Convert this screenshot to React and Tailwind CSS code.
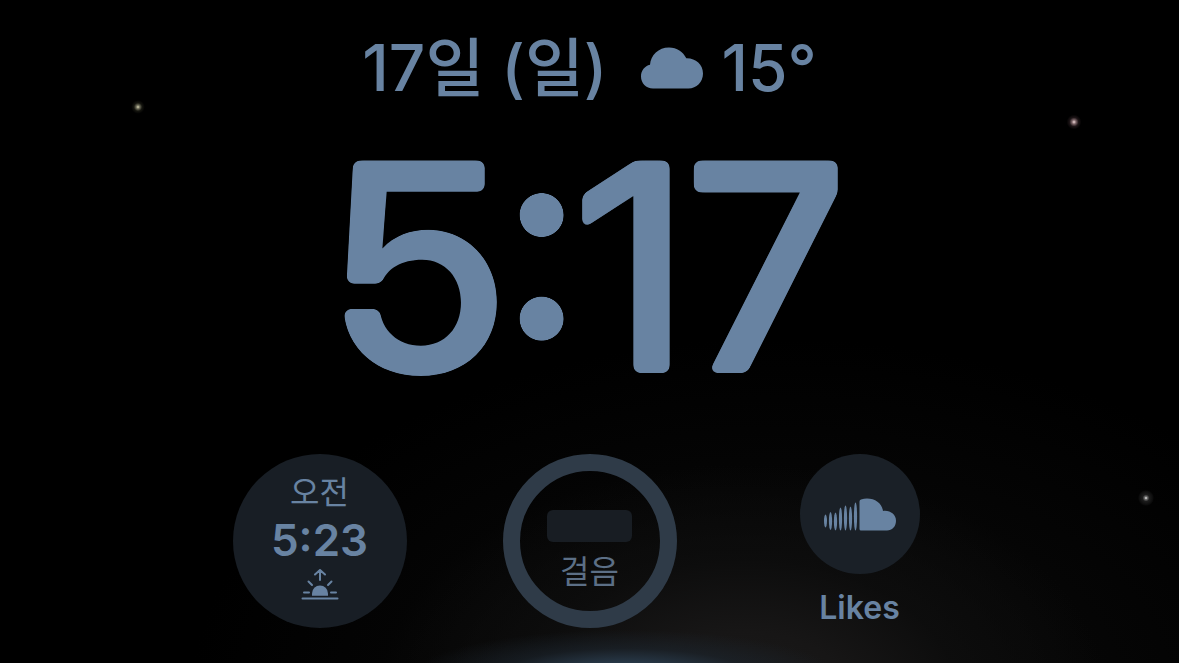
import React from 'react';

const stars = [
  { id: 'left', className: 'left-[11.7%] top-[16.1%] bg-[radial-gradient(circle,#d8d5b4_0%,#6b6a58_16%,#15150f_36%,transparent_60%)]' },
  { id: 'right', className: 'left-[91.1%] top-[18.4%] bg-[radial-gradient(circle,#f2dcdc_0%,#7d6669_18%,#1c1416_40%,transparent_65%)]' },
  { id: 'low', className: 'left-[97.2%] top-[75.1%] bg-[radial-gradient(circle,#f0f0ee_0%,#6a6a6a_14%,#1d1d1d_30%,#0c0c0c_60%,transparent_72%)]' },
];

function Sky() {
  return (
    <div aria-hidden="true" className="absolute inset-0 -z-10 overflow-hidden bg-black">
      <div className="absolute inset-0 bg-[radial-gradient(ellipse_50%_55%_at_66%_106%,#0b0b0b_0%,#060606_50%,transparent_100%)]" />
      <div className="absolute inset-0 bg-[radial-gradient(ellipse_31%_36%_at_63%_106%,#1b1a1a_0%,#171616_30%,#0e0e0ecc_60%,transparent_100%)]" />
      <div className="absolute inset-0 bg-[radial-gradient(ellipse_18%_7%_at_53%_102%,#2f4659_0%,#273746_30%,#1c252e99_60%,transparent_100%)]" />
      {stars.map((s) => (
        <span key={s.id} className={`absolute size-4 -translate-x-1/2 -translate-y-1/2 rounded-full ${s.className}`} />
      ))}
    </div>
  );
}

// softens the outer corners of the big digits, inner corners stay sharp
function RoundFilter() {
  return (
    <svg aria-hidden="true" className="absolute size-0">
      <filter id="round" x="-5%" y="-5%" width="110%" height="110%">
        <feGaussianBlur in="SourceGraphic" stdDeviation="5" result="blur" />
        <feColorMatrix in="blur" values="1 0 0 0 0  0 1 0 0 0  0 0 1 0 0  0 0 0 16 -7" result="soft" />
        <feComposite in="SourceGraphic" in2="soft" operator="in" />
      </filter>
    </svg>
  );
}

function CloudIcon() {
  return (
    <svg viewBox="0 0 62 42" className="h-[42px] w-[62px]" fill="currentColor" aria-hidden="true">
      <path d="M12 41.500C5 41.500 0 36 0 29.500C0 23.500 3.800 19 9 17.800C9.800 8 17.500 .5 28 .5C36 .5 42 4.800 45.300 11.300C54.500 11 62 17.500 62 26.500C62 35 55.500 41.500 47.500 41.500Z" />
    </svg>
  );
}

function SunriseIcon() {
  return (
    <svg viewBox="0 0 38 32" className="h-8 w-[38px]" fill="none" stroke="currentColor" strokeWidth="2" strokeLinecap="round" strokeLinejoin="round" aria-hidden="true">
      <path d="M19 11V1.500M14 5.500L19 1L24 5.500" />
      <path d="M7.500 12.500L11 16M30.500 12.500L27 16M3 23.500H8M30 23.500H35M1.500 29.500H36.500" />
      <path d="M11 26.800V24.500A8 8 0 0 1 27 24.500V26.800Z" fill="currentColor" stroke="none" />
    </svg>
  );
}

function SoundCloudIcon() {
  return (
    <svg viewBox="0 0 72 33" className="h-[33px] w-[72px]" fill="currentColor" aria-hidden="true">
      <ellipse cx="1.500" cy="23" rx="1.500" ry="6.500" />
      <ellipse cx="6.500" cy="23" rx="1.600" ry="9" />
      <ellipse cx="11.500" cy="23.500" rx="1.600" ry="9" />
      <ellipse cx="16.500" cy="21" rx="1.600" ry="11.500" />
      <ellipse cx="21.500" cy="20" rx="1.600" ry="12.500" />
      <ellipse cx="26.500" cy="20.500" rx="1.600" ry="12" />
      <ellipse cx="31.500" cy="18.500" rx="1.600" ry="14" />
      <path d="M35.500 3.500Q35.500 2 37 1.500Q40 .5 43 .5C51.500 .5 58 5.500 59 13C66 12 72 16.500 72 22.700C72 28.500 68 32.500 63 32.500H37Q35.500 32.500 35.500 31Z" />
    </svg>
  );
}

export default function App() {
  return (
    <main lang="ko" className="relative isolate flex min-h-screen flex-col items-center overflow-hidden font-['Inter','Noto_Sans_CJK_KR',sans-serif] text-[#6883a2]">
      <Sky />
      <RoundFilter />

      <header className="flex items-center gap-[18px] pt-7 text-[64px] leading-[80px] font-medium whitespace-pre">
        <p className="pr-4">17일 (일)</p>
        <CloudIcon />
        <p>15°</p>
      </header>

      <h1 className="mt-[15px] font-['Inter_Display','Inter',sans-serif] text-[292px] leading-[288px] font-semibold filter-[url(#round)]">5:17</h1>

      <section className="mt-[43px] grid w-full max-w-[810px] grid-cols-3 items-start justify-items-center">
        <div className="flex size-[174px] flex-col items-center rounded-full bg-[#181e25] pt-[21px]">
          <span className="text-[32px] leading-[36px]">오전</span>
          <span className="text-[44px] leading-[58px] font-semibold">5:23</span>
          <SunriseIcon />
        </div>

        <div className="flex size-[174px] flex-col items-center rounded-full border-[17px] border-[#2f3b48] pt-[39px]">
          <div className="h-8 w-[85px] rounded-md bg-[#181d23]" />
          <span className="mt-3 text-[32px] leading-[36px] text-[#5c6f86]">걸음</span>
        </div>

        <a href="#likes" className="flex flex-col items-center">
          <span className="flex size-[120px] items-center justify-center rounded-full bg-[#1a2027]">
            <SoundCloudIcon />
          </span>
          <span className="mt-4 text-[32px] leading-[36px] font-semibold">Likes</span>
        </a>
      </section>
    </main>
  );
}
